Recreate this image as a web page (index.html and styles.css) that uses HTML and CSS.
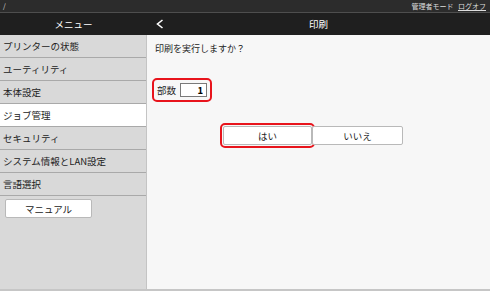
FILE: index.html
```html
<!DOCTYPE html>
<html lang="ja">

<head>
    <meta charset="UTF-8">
    <meta name="viewport" content="width=device-width, initial-scale=1.0">
    <title>印刷</title>
    <link rel="stylesheet" href="styles.css">
</head>

<body>
    <div class="topbar">
        <span class="path">/</span>
        <span class="user">管理者モード <a href="#" class="logoff">ログオフ</a></span>
    </div>
    <div class="header">
        <div class="header-menu">メニュー</div>
        <div class="header-main">
            <svg class="back" width="8" height="10" viewBox="0 0 8 10">
                <polyline points="6.5,1 1.5,5 6.5,9" fill="none" stroke="#fff" stroke-width="1.6"/>
            </svg>
            <span class="title">印刷</span>
        </div>
    </div>
    <div class="page">
        <div class="sidebar">
            <div class="menu-item">プリンターの状態</div>
            <div class="menu-item">ユーティリティ</div>
            <div class="menu-item">本体設定</div>
            <div class="menu-item active">ジョブ管理</div>
            <div class="menu-item">セキュリティ</div>
            <div class="menu-item">システム情報とLAN設定</div>
            <div class="menu-item">言語選択</div>
            <button class="manual">マニュアル</button>
        </div>
        <div class="main">
            <p class="question">印刷を実行しますか？</p>
            <div class="copies">
                <label for="copies">部数</label>
                <input type="text" id="copies" value="1">
            </div>
            <div class="actions">
                <div class="focus"><button class="btn">はい</button></div>
                <button class="btn no">いいえ</button>
            </div>
        </div>
    </div>
</body>

</html>
```

FILE: styles.css
```css
body {
    margin: 0;
    padding: 0;
    font-family: "Noto Sans CJK JP", "Noto Sans", sans-serif;
    font-size: 9.5px;
    color: #222;
    background-color: #f7f7f7;
    height: 291px;
    overflow: hidden;
}

.topbar {
    height: 12px;
    background-color: #2c2c2c;
    border-bottom: 1px solid #4e4e4e;
    color: #ddd;
    font-size: 7px;
    display: flex;
    justify-content: space-between;
    align-items: center;
    padding: 0 4px 0 3px;
}

.logoff {
    color: #ddd;
    margin-left: 3px;
}

.header {
    height: 22px;
    background-color: #1f1f1f;
    color: #fff;
    display: flex;
    align-items: center;
    font-size: 9.5px;
}

.header-menu {
    width: 147px;
    text-align: center;
}

.header-main {
    flex: 1;
    position: relative;
    text-align: center;
}

.back {
    position: absolute;
    left: 9px;
    top: 2px;
}

.page {
    display: flex;
    height: 254px;
    border-bottom: 2px solid #c6c6c6;
}

.sidebar {
    width: 146px;
    background-color: #d9d9d9;
    border-right: 1px solid #c4c4c4;
    display: flex;
    flex-direction: column;
    align-items: flex-start;
}

.menu-item {
    width: 100%;
    height: 23px;
    line-height: 22px;
    padding-left: 3px;
    box-sizing: border-box;
    border-bottom: 1px solid #a9a9a9;
    white-space: nowrap;
}

.menu-item.active {
    background-color: #fff;
}

.manual {
    margin: 3px 0 0 5px;
    width: 87px;
    height: 19px;
    background-color: #fff;
    border: 1px solid #b9b9b9;
    border-radius: 2px;
    font-family: inherit;
    font-size: 9.5px;
    color: #222;
    padding: 0;
}

.main {
    flex: 1;
    padding: 7px 0 0 8px;
}

.question {
    margin: 0;
    line-height: 14px;
    font-size: 9px;
}

.copies {
    margin: 22px 0 0 -3px;
    width: 53px;
    height: 20px;
    border: 2px solid #e8141c;
    border-radius: 5px;
    display: flex;
    align-items: center;
    padding-left: 3px;
}

.copies label {
    font-size: 9.5px;
    width: 23px;
}

.copies input {
    width: 27px;
    height: 14px;
    box-sizing: border-box;
    border: 1px solid #7a7a7a;
    text-align: right;
    font-family: inherit;
    font-size: 9.5px;
    font-weight: bold;
    padding: 0 3px;
    margin: 0;
}

.actions {
    display: flex;
    align-items: center;
    margin: 21px 0 0 65px;
}

.focus {
    border: 2px solid #e8141c;
    border-radius: 5px;
    padding: 1px;
    display: flex;
}

.btn {
    width: 89px;
    height: 19px;
    background-color: #fff;
    border: 1px solid #b9b9b9;
    border-radius: 2px;
    font-family: inherit;
    font-size: 9.5px;
    color: #222;
    padding: 0;
}

.btn.no {
    width: 91px;
    margin-left: -3px;
}
```
